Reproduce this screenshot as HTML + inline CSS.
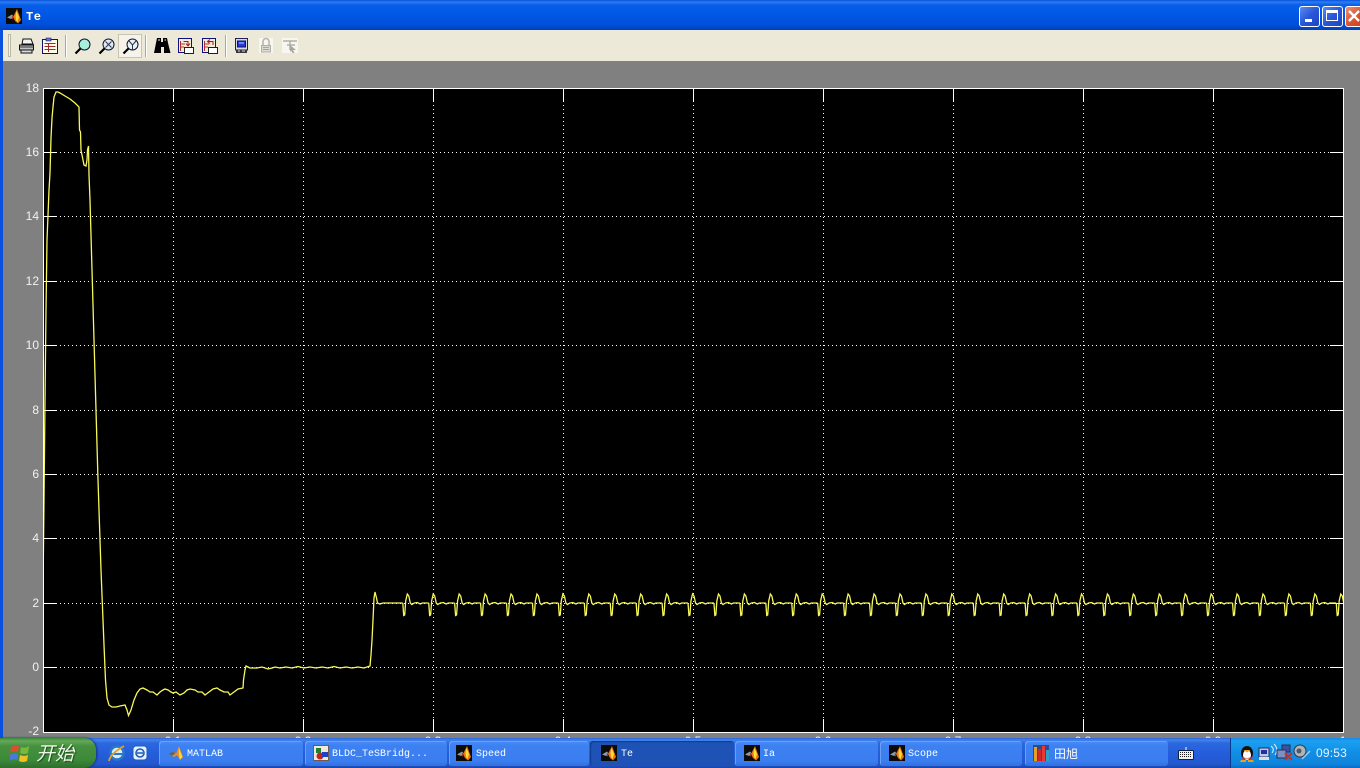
<!DOCTYPE html>
<html>
<head>
<meta charset="utf-8">
<title>Te</title>
<style>
html,body{margin:0;padding:0;width:1360px;height:768px;overflow:hidden;background:#808080}
body{position:relative;font-family:"Liberation Sans","Noto Sans CJK SC",sans-serif}
.a{position:absolute}
#title{left:0;top:0;width:1360px;height:30px;background:linear-gradient(#0a52d8 0,#2a7cf4 2px,#0a5ee8 5px,#0058e6 14px,#0050dc 24px,#0044c4 29px,#0040b8 30px)}
#ttext{left:26px;top:10px;color:#fff;font:bold 12px/14px "Liberation Mono","Noto Sans CJK SC",monospace;letter-spacing:.5px}
.wb{top:6px;width:19px;height:19px;border:1px solid #fff;border-radius:3px;background:linear-gradient(135deg,#5a8cf0,#2a56d8 50%,#1e44c0)}
#tb{left:3px;top:30px;width:1357px;height:31px;background:#ece9d8}
#lb{left:0;top:30px;width:3px;height:708px;background:#0a50e0}
.sep{top:35px;width:1px;height:22px;background:#aca899;border-right:1px solid #fff}
#press{left:118px;top:34px;width:24px;height:24px;background:#f6f4ea;border:1px solid #c8c4b4;box-sizing:border-box}
.yl{position:absolute;left:0;width:39px;text-align:right;font-size:12px;line-height:14px;color:#f2f2f2}
.xl{position:absolute;top:734px;width:40px;text-align:center;font-size:12px;line-height:14px;color:#f2f2f2}
#bar{left:0;top:738px;width:1360px;height:30px;background:linear-gradient(#2c62d8 0,#3f86ee 2px,#2e68de 5px,#245edb 15px,#2358d0 26px,#1a45ac 30px)}
#start{left:0;top:738px;width:96px;height:30px;border-radius:0 12px 12px 0;background:linear-gradient(#3a8a3a 0,#66a85a 3px,#46913f 8px,#3c8a3a 22px,#2d6e2d 30px);box-shadow:1px 0 2px #12307c}
#stext{left:36px;top:740px;color:#eef6e6;font:italic 19px/25px "Noto Sans CJK SC",sans-serif;text-shadow:1px 1px 1px #1c4c1c}
.t{position:absolute;top:741px;height:25px;border-radius:3px;background:linear-gradient(#4a8cf6,#3c80f2 20%,#3a7ef0 80%,#3270e0);box-shadow:inset 1px 1px 0 #6aa0f6;color:#fff;font:10px/25px "Liberation Mono","Noto Sans CJK SC",monospace;box-sizing:border-box;white-space:pre}
.t span{position:absolute;top:1px}
.t.act{background:#1e52b4;box-shadow:inset 1px 1px 1px #123a8c}
.t svg{position:absolute;top:4px}
#tray{left:1230px;top:738px;width:130px;height:30px;background:linear-gradient(#1a88e8 0,#1ca0f0 3px,#118fe6 14px,#0f84dc 26px,#0c6cc4 30px);border-left:1px solid #0a3a90;box-sizing:border-box}
#clock{left:1316px;top:746px;color:#e8f2ff;font:12px/15px "Liberation Sans",sans-serif;letter-spacing:.2px}
svg{display:block}
</style>
</head>
<body>

<svg width="0" height="0" style="position:absolute">
<defs>
<symbol id="ml" viewBox="0 0 16 16">
<rect width="16" height="16" fill="#0b0b0b"/>
<path d="M1 9.500L6 6.500 8 9 5 11z" fill="#8c9aa8"/>
<path d="M7 9L11 1 15 12 12 15.500 9 13z" fill="#e87810"/>
<path d="M10.500 3L13 9 11.500 14 10 12 9.500 8z" fill="#ffdc3c"/>
<path d="M6 8L8 9 6 12z" fill="#b03010"/>
</symbol>
<path id="wv" d="M-4.500 603L-3.600 615.500-2.600 615-1.600 601 0 594 1.500 596 3 603 4.500 604.500 7 603 10 602.500 13 604 15 603 21.430 603" fill="none" stroke="#f8f85a" stroke-width="1.300"/>
<clipPath id="pc"><rect x="44" y="89" width="1299" height="643"/></clipPath>
</defs>
</svg>

<div class="a" id="title"></div>
<svg class="a" style="left:6px;top:8px" width="16" height="16"><use href="#ml"/></svg>
<div class="a" id="ttext">Te</div>

<div class="a wb" style="left:1299px"><div class="a" style="left:5px;top:12px;width:7px;height:3px;background:#fff"></div></div>
<div class="a wb" style="left:1322px"><div class="a" style="left:3px;top:3px;width:12px;height:11px;border:1px solid #fff;border-top:3px solid #fff;box-sizing:border-box"></div></div>
<div class="a wb" style="left:1345px;width:24px;background:linear-gradient(135deg,#e8907a,#d8502c 50%,#c03a18)">
<svg class="a" style="left:1px;top:2px" width="14" height="14"><path d="M2 2L12 12M12 2L2 12" stroke="#fff" stroke-width="2.400"/></svg></div>

<div class="a" id="lb"></div>
<div class="a" id="tb"></div>

<!-- toolbar -->
<div class="a" style="left:8px;top:34px;width:3px;height:23px;border:1px solid #bdb9a8;box-sizing:border-box;background:#f4f2e8"></div>
<div class="a sep" style="left:65px"></div>
<div class="a sep" style="left:145px"></div>
<div class="a sep" style="left:225px"></div>
<div class="a" id="press"></div>

<svg class="a" style="left:0;top:30px" width="310" height="31">
<!-- printer -->
<g transform="translate(18,8)" stroke="#111" fill="#fff">
<path d="M5 1H13L15 6H4z" fill="#f2f2f2"/>
<path d="M1.500 7H15.500V12H1.500z" fill="#c4c4c4"/>
<path d="M1.500 9H15.500" stroke="#333"/>
<path d="M3 12H14V15H3z" fill="#dcdcdc"/>
</g>
<!-- clipboard -->
<g transform="translate(42,8)">
<path d="M.5 1.500H15.500V15.500H.5z" fill="#fdfbe8" stroke="#101070"/>
<path d="M4 0H9V3H4z" fill="#7070c0" stroke="#101070" stroke-width=".6"/>
<path d="M2.500 5.500H13.500M2.500 8.500H13.500M2.500 11.500H13.500M6.500 5V14" stroke="#a02828"/>
</g>
<!-- zoom in -->
<g transform="translate(74,8)">
<circle cx="10.500" cy="6.500" r="5.500" fill="#a8f0dc" stroke="#101030"/>
<path d="M6.500 10.500L1.500 15.500" stroke="#000" stroke-width="2.200"/>
</g>
<!-- zoom x -->
<g transform="translate(98,8)">
<circle cx="10.500" cy="6.500" r="5.500" fill="#dcecf0" stroke="#101030"/>
<path d="M7.500 3.500L13.500 9.500M13.500 3.500L7.500 9.500" stroke="#303050"/>
<path d="M6.500 10.500L1.500 15.500" stroke="#000" stroke-width="2.200"/>
</g>
<!-- zoom y -->
<g transform="translate(122,8)">
<circle cx="10.500" cy="6.500" r="5.500" fill="#e8f4f4" stroke="#101030"/>
<path d="M7 3L10.500 7 14 3M10.500 7V12" stroke="#303050" fill="none"/>
<path d="M6.500 10.500L1.500 15.500" stroke="#000" stroke-width="2.200"/>
</g>
<!-- binoculars -->
<g transform="translate(154,7)" fill="#000">
<path d="M3 1H7V5H9V1H13L14 6 16.500 16H10V10H7V16H0L2 6z"/>
<path d="M4 2H6V4H4z" fill="#777"/><path d="M10.500 2H12V4H10.500z" fill="#777"/>
</g>
<!-- save axes -->
<g transform="translate(178,8)">
<path d="M.5 .5H13.500V14.500H.5z" fill="#f4ecd8" stroke="#10107c"/>
<path d="M2.500 3V13M2 6H7M2 9H6" stroke="#b03030"/>
<path d="M5.500 3.500H10V7M8 5.500L10 8 12 5.500" stroke="#a01818" fill="none"/>
<path d="M6.500 9.500H15.500V15.500H6.500z" fill="#fff" stroke="#202020"/>
</g>
<!-- restore axes -->
<g transform="translate(202,8)">
<path d="M.5 .5H13.500V14.500H.5z" fill="#f4ecd8" stroke="#10107c"/>
<path d="M2.500 3V13M2 6H7M2 9H6" stroke="#b03030"/>
<path d="M6 3.500H11V7M8 1.500L5.500 3.500 8 5.500" stroke="#a01818" fill="none"/>
<path d="M6.500 9.500H15.500V15.500H6.500z" fill="#fff" stroke="#202020"/>
</g>
<!-- params -->
<g transform="translate(234,8)">
<path d="M1.500 .5H13.500V12H1.500z" fill="#d8d8e8" stroke="#20205c"/>
<path d="M3.500 3H11.500V9H3.500z" fill="#2838d8" stroke="#101060"/>
<path d="M5 5H10" stroke="#a0e0ff"/>
<path d="M2 12H13V15H2z" fill="#383838"/>
<path d="M4 13H6M8 13H11" stroke="#ddd"/>
</g>
<!-- lock (disabled) -->
<g transform="translate(258,7)" fill="#f7f6ef">
<path d="M1 1H15V16H1z"/>
<path d="M5 8V4.500A3 3 0 0 1 11 4.500V8" fill="none" stroke="#b8b6ac" stroke-width="1.600"/>
<path d="M3.500 8.500H12.500V15H3.500z" fill="#dcdad0" stroke="#b0aea4"/>
<path d="M5 10.500H11M5 12.500H11" stroke="#a8a69c"/>
</g>
<!-- signal select (disabled) -->
<g transform="translate(282,8)">
<path d="M0 0H16V15H0z" fill="#f7f6ef"/>
<path d="M1 3H15M5 7H13M8 3V12" stroke="#b2b0a6" stroke-width="1.500"/>
<path d="M8 7L14 12H11L12.500 15H10.500L9 12.500 8 14z" fill="#a8a69c"/>
</g>
</svg>

<!-- axis labels -->
<div class="yl" style="top:81px">18</div>
<div class="yl" style="top:145px">16</div>
<div class="yl" style="top:209px">14</div>
<div class="yl" style="top:274px">12</div>
<div class="yl" style="top:338px">10</div>
<div class="yl" style="top:403px">8</div>
<div class="yl" style="top:467px">6</div>
<div class="yl" style="top:531px">4</div>
<div class="yl" style="top:596px">2</div>
<div class="yl" style="top:660px">0</div>
<div class="yl" style="top:724px">-2</div>

<div class="xl" style="left:153px">0.1</div>
<div class="xl" style="left:283px">0.2</div>
<div class="xl" style="left:413px">0.3</div>
<div class="xl" style="left:543px">0.4</div>
<div class="xl" style="left:673px">0.5</div>
<div class="xl" style="left:803px">0.6</div>
<div class="xl" style="left:933px">0.7</div>
<div class="xl" style="left:1063px">0.8</div>
<div class="xl" style="left:1193px">0.9</div>
<div class="xl" style="left:1323px">1</div>

<!-- plot -->
<svg class="a" style="left:0;top:0" width="1360" height="768">
<rect x="43" y="88" width="1300" height="644" fill="#000"/>
<g stroke="#fff" stroke-dasharray="1 3" shape-rendering="crispEdges" stroke-width="1">
<path d="M44 152.500H1343M44 216.500H1343M44 281.500H1343M44 345.500H1343M44 410.500H1343M44 474.500H1343M44 538.500H1343M44 603.500H1343M44 667.500H1343"/>
<path d="M173.500 89V732M303.500 89V732M433.500 89V732M563.500 89V732M693.500 89V732M823.500 89V732M953.500 89V732M1083.500 89V732M1213.500 89V732"/>
</g>
<g stroke="#fff" shape-rendering="crispEdges" stroke-width="1">
<path d="M44 152.500H57M44 216.500H57M44 281.500H57M44 345.500H57M44 410.500H57M44 474.500H57M44 538.500H57M44 603.500H57M44 667.500H57"/>
<path d="M1330 152.500H1343M1330 216.500H1343M1330 281.500H1343M1330 345.500H1343M1330 410.500H1343M1330 474.500H1343M1330 538.500H1343M1330 603.500H1343M1330 667.500H1343"/>
<path d="M173.500 89V102M303.500 89V102M433.500 89V102M563.500 89V102M693.500 89V102M823.500 89V102M953.500 89V102M1083.500 89V102M1213.500 89V102"/>
<path d="M173.500 719V732M303.500 719V732M433.500 719V732M563.500 719V732M693.500 719V732M823.500 719V732M953.500 719V732M1083.500 719V732M1213.500 719V732"/>
<path d="M43.500 88V732.500M43 88.500H1343.500M1343.500 88V732.500M43 732.500H1344"/>
</g>
<g clip-path="url(#pc)">
<path fill="none" stroke="#f8f85a" stroke-width="1.300" d="M43 590L44 500 45 400 46 310 47 240 49 190 50 173 51 138 52 118 53 107 54 97 56 92 58 92 60 93 65 96 70 99 75 103 79 107 79.500 130 80.500 132 81 150 82 155 83 160 84 165 86 166 87 160 87.500 150 88.500 146 89 175 90 200 92 270 95 375 98 480 101 570 104 645 105.500 680 107 698 109 705 112 707 116 707 120 706 125 705 127 710 128.500 715.500 131 710 134 700 137 693 140 689 143 688 147 690 150 692 153 692 157 695 160 692 163 690 165 689 168 690 171 692 173 693 176 692 180 695 184 693 187 690 190 689 195 690 198 692 202 692 205 695 209 692 213 689 217 688 220 690 224 692 228 692 230 695 234 692 238 689 243 688 243.500 680 245 670 246 666 250 668 257 668 262 667 268 669 272 668 275 667 280 668 286 667 292 668 298 666.500 304 668 310 667 316 668 322 667 328 668 334 666.500 340 668 346 667 352 668 358 667 364 668 370 666 371 655 372 640 373 620 374 598 375 592 376.500 598 377.500 603 380 604 383 603 402.800 603"/>
<use href="#wv" x="407.300"/><use href="#wv" x="433.230"/><use href="#wv" x="459.160"/><use href="#wv" x="485.090"/><use href="#wv" x="511.020"/><use href="#wv" x="536.950"/><use href="#wv" x="562.880"/><use href="#wv" x="588.810"/><use href="#wv" x="614.740"/><use href="#wv" x="640.670"/><use href="#wv" x="666.600"/><use href="#wv" x="692.530"/><use href="#wv" x="718.460"/><use href="#wv" x="744.390"/><use href="#wv" x="770.320"/><use href="#wv" x="796.250"/><use href="#wv" x="822.180"/><use href="#wv" x="848.110"/><use href="#wv" x="874.040"/><use href="#wv" x="899.970"/><use href="#wv" x="925.900"/><use href="#wv" x="951.830"/><use href="#wv" x="977.760"/><use href="#wv" x="1003.690"/><use href="#wv" x="1029.620"/><use href="#wv" x="1055.550"/><use href="#wv" x="1081.480"/><use href="#wv" x="1107.410"/><use href="#wv" x="1133.340"/><use href="#wv" x="1159.270"/><use href="#wv" x="1185.200"/><use href="#wv" x="1211.130"/><use href="#wv" x="1237.060"/><use href="#wv" x="1262.990"/><use href="#wv" x="1288.920"/><use href="#wv" x="1314.850"/><use href="#wv" x="1340.780"/>
</g>
</svg>

<!-- taskbar -->
<div class="a" id="bar"></div>
<div class="a" id="start"></div>
<svg class="a" style="left:10px;top:743px" width="20" height="20">
<path d="M1 4Q5 1 9 3L8 9Q4 7 0 10z" fill="#d8502c"/>
<path d="M11 4Q15 6 19 3L18 10Q14 12 10 10z" fill="#7ab83c"/>
<path d="M0 12Q4 9 8 11L7 17Q3 15 0 18z" fill="#4a7ad8"/>
<path d="M10 12Q14 14 18 12L17 18Q13 20 9 18z" fill="#f0c028"/>
</svg>
<div class="a" id="stext">开始</div>

<!-- quick launch -->
<svg class="a" style="left:108px;top:743px" width="42" height="20">
<ellipse cx="9" cy="10" rx="6.500" ry="6.500" fill="#d8eef8" stroke="#2a78c8" stroke-width="2.400"/>
<path d="M3 11H15" stroke="#2a78c8" stroke-width="2"/>
<path d="M1 18Q2 11 16 3" stroke="#e8a020" stroke-width="1.800" fill="none"/>
<rect x="25" y="3" width="14" height="14" rx="3" fill="#e8f2fc" stroke="#1c5cb8"/>
<circle cx="32" cy="10" r="4" fill="none" stroke="#1c5cb8" stroke-width="1.600"/>
<path d="M29 10H35" stroke="#1c5cb8" stroke-width="1.500"/>
</svg>

<div class="t" style="left:159px;width:144px"><svg style="left:9px" width="16" height="16"><path d="M0 9L6 6 8 9 11 1 15 12 12 15 9 10 6 12z" fill="#f09020"/><path d="M10.800 3L14.500 12 12 14.500 11 10z" fill="#ffd840"/><path d="M0 9L6 6 7 9 4 11z" fill="#506a84"/></svg><span style="left:28px">MATLAB</span></div>
<div class="t" style="left:305px;width:142px"><svg style="left:8px" width="16" height="16"><rect x=".5" y=".5" width="15" height="15" fill="#f0e8d8" stroke="#6a5a50"/><rect x="3" y="3" width="5" height="5" fill="#208030"/><circle cx="7" cy="11" r="3.500" fill="#c82020"/><rect x="9" y="7" width="6" height="5" fill="#2040c8"/></svg><span style="left:27px">BLDC_TeSBridg...</span></div>
<div class="t" style="left:449px;width:140px"><svg style="left:7px" width="16" height="16"><use href="#ml"/></svg><span style="left:27px">Speed</span></div>
<div class="t act" style="left:590px;width:144px"><svg style="left:11px" width="16" height="16"><use href="#ml"/></svg><span style="left:31px">Te</span></div>
<div class="t" style="left:735px;width:143px"><svg style="left:9px" width="16" height="16"><use href="#ml"/></svg><span style="left:28px">Ia</span></div>
<div class="t" style="left:880px;width:142px"><svg style="left:9px" width="16" height="16"><use href="#ml"/></svg><span style="left:28px">Scope</span></div>
<div class="t" style="left:1025px;width:143px;font:12px/25px 'Noto Sans CJK SC',sans-serif"><svg style="left:8px" width="16" height="16"><rect width="16" height="16" fill="#2a4c8c"/><rect x="1" y="2" width="3" height="14" fill="#e8a020"/><rect x="5" y="4" width="3" height="12" fill="#d02828"/><rect x="9" y="1" width="3" height="15" fill="#e83838"/><rect x="13" y="5" width="3" height="11" fill="#30a0c8"/></svg><span style="left:29px;top:0">田旭</span></div>

<!-- keyboard -->
<svg class="a" style="left:1178px;top:747px" width="16" height="14">
<path d="M8 0V3" stroke="#fff"/>
<rect x=".5" y="3.500" width="15" height="9" rx="1" fill="#f0f0f0" stroke="#102040"/>
<path d="M2 5.500H14M2 7.500H14M2 9.500H14" stroke="#202020" stroke-dasharray="1 1"/>
</svg>

<!-- tray -->
<div class="a" id="tray"></div>
<svg class="a" style="left:1238px;top:742px" width="76" height="22">
<!-- QQ penguin -->
<ellipse cx="9" cy="11" rx="6" ry="7" fill="#101010"/>
<ellipse cx="9" cy="13" rx="4" ry="5" fill="#fff"/>
<path d="M5.500 8H12.500L9 10.500z" fill="#f0a010"/>
<path d="M3 14Q9 18 15 14L14 16.500H4z" fill="#d82020"/>
<path d="M3 18H8V20H2zM10 18H15L16 20H10z" fill="#f0a010"/>
<!-- network 1 -->
<rect x="21" y="6" width="10" height="9" fill="#b8c8e8" stroke="#203060"/>
<rect x="23" y="8" width="6" height="4" fill="#2030a0"/>
<path d="M21 15H31V18H21z" fill="#ddd"/>
<path d="M33 4Q37 7 34 11M36 2Q41 7 37 13" stroke="#e0f0ff" fill="none"/>
<!-- network 2 -->
<rect x="44" y="3" width="8" height="7" fill="#4050a0" stroke="#203060"/>
<rect x="39" y="8" width="9" height="8" fill="#8090c0" stroke="#203060"/>
<path d="M47 11L54 18M54 11L47 18" stroke="#e02818" stroke-width="2.200"/>
<!-- speaker -->
<circle cx="62" cy="9" r="6" fill="#b0b4b8" stroke="#283848"/>
<circle cx="61" cy="9" r="2.500" fill="#505868"/>
<path d="M64 17L72 9" stroke="#a0c8f0" stroke-width="1.500"/>
</svg>
<div class="a" id="clock">09:53</div>

</body>
</html>
